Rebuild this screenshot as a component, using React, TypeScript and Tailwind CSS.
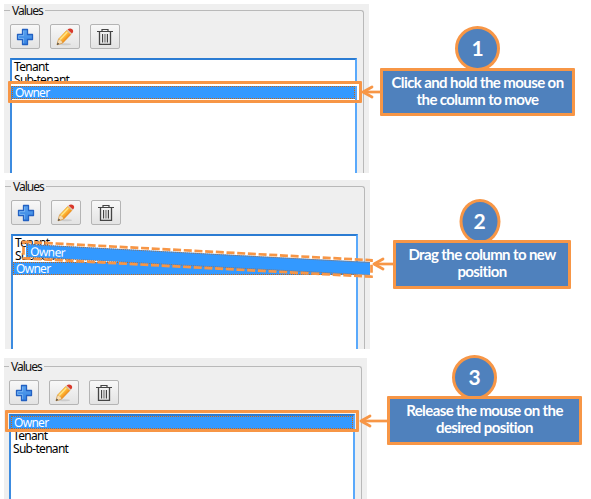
import React from "react";

function PlusIcon() {
  return (
    <svg width="18" height="18" viewBox="0 0 18 18">
      <defs>
        <linearGradient id="plusFill" x1="0" y1="0" x2="0" y2="1">
          <stop offset="0" stopColor="#5ba3ee" />
          <stop offset="1" stopColor="#3583e2" />
        </linearGradient>
      </defs>
      <path d="M6.5 1.5h5v5h5v5h-5v5h-5v-5h-5v-5h5z" fill="url(#plusFill)" stroke="#2361c2" strokeWidth="1.3" strokeLinejoin="round" />
      <path d="M7.6 15.3V10.5H2.7V7.6H7.6V2.7" fill="none" stroke="#86bff6" strokeWidth="0.7" />
    </svg>
  );
}

function PencilIcon() {
  return (
    <svg width="18" height="18" viewBox="0 0 18 18">
      <defs>
        <linearGradient id="pencilFill" x1="0.3" y1="0.3" x2="0.7" y2="0.7">
          <stop offset="0" stopColor="#ffc93c" />
          <stop offset="0.45" stopColor="#ffb838" />
          <stop offset="1" stopColor="#ea7d10" />
        </linearGradient>
      </defs>
      <ellipse cx="9" cy="16.2" rx="6" ry="1" fill="#cccccc" />
      <path d="M1 16.8 2.6 10.9 10.6 2.4 15 6.4 6.8 15z" fill="url(#pencilFill)" stroke="#e08a18" strokeWidth="0.5" />
      <path d="M1 16.8 2.5 11.2C4 11 6.5 13 6.6 15z" fill="#f8deb4" stroke="#c08a48" strokeWidth="0.4" />
      <path d="M0.9 17 1.6 14.5 3.3 16.1z" fill="#444" />
      <path d="M10.6 2.4 11.7 1.4 16 5.4 15 6.4z" fill="#d8c4a8" />
      <path d="M11.6 1.5C13 .2 15 .2 16.3 1.3 17.6 2.6 17.4 4.2 16 5.5z" fill="#d9382a" />
      <path d="M4.2 11.5 11.3 4" stroke="#ffe68c" strokeWidth="1.2" />
    </svg>
  );
}

function TrashIcon() {
  return (
    <svg width="18" height="18" viewBox="0 0 18 18" fill="none" stroke="#444">
      <path d="M1 3.5h16M6 3V1.5h6V3" strokeWidth="1.2" />
      <path d="M3.5 4v12.4h11V4" strokeWidth="1.3" />
      <path d="M6.5 6v8.5M11.5 6v8.5" strokeWidth="1" />
      <path d="M8.3 6v8.5M9.8 6v8.5" strokeWidth="0.8" stroke="#777" />
    </svg>
  );
}

function ToolButton({ children }: { children: React.ReactNode }) {
  return (
    <button className="flex h-[25px] w-[30px] items-center justify-center rounded-[2px] border border-[#b4b4b4] bg-gradient-to-b from-[#f8f8f8] to-[#e3e3e3]">
      {children}
    </button>
  );
}

function ListRow({ label, selected }: { label: string; selected?: boolean }) {
  return (
    <li
      className={
        selected
          ? "h-[13px] bg-[#3399ff] pl-[3px] text-white outline-1 -outline-offset-1 outline-dotted outline-[#cc6611]"
          : "h-[13px] pl-[2px] text-black"
      }
    >
      {label}
    </li>
  );
}

interface PanelProps {
  className: string;
  inset: string;
  items: string[];
  children?: React.ReactNode;
}

function ValuesPanel({ className, inset, items, children }: PanelProps) {
  return (
    <div className={`flex shrink-0 flex-col bg-[#efefef] pr-[5px] text-[12px] leading-[13px] tracking-[-0.7px] ${className}`}>
      <div className={`flex grow flex-col rounded-tr-[3px] border-t border-r border-[#b9b9b9] pr-[6px] ${inset}`}>
        <div className="-mt-[7px] h-[13px] w-fit bg-[#efefef] px-[2px] tracking-[-1px] text-[#111]">Values</div>
        <div className="mt-[7px] flex gap-[10px]">
          <ToolButton><PlusIcon /></ToolButton>
          <ToolButton><PencilIcon /></ToolButton>
          <ToolButton><TrashIcon /></ToolButton>
        </div>
        <ul className="mt-[9px] grow border-x-2 border-t-2 border-t-[#2b7cd3] border-r-[#5aa9fb] border-l-[#3c8be0] bg-white">
          {items.map((item) => (
            <ListRow key={item} label={item} selected={item === "Owner"} />
          ))}
        </ul>
      </div>
      {children}
    </div>
  );
}

function Arrow({ className, length }: { className: string; length: number }) {
  return (
    <svg className={`absolute ${className}`} width={length} height="14" viewBox={`0 0 ${length} 14`} fill="none" stroke="#f79646" strokeLinecap="round">
      <path d={`M2 7H${length}`} strokeWidth="2.7" strokeLinecap="butt" />
      <path d="M11 2 2 7l9 5" strokeWidth="2.8" strokeLinejoin="round" />
    </svg>
  );
}

interface CalloutProps {
  step: number;
  className: string;
  circle: string;
  box: string;
  lines: string[];
  children: React.ReactNode;
}

function Callout({ step, className, circle, box, lines, children }: CalloutProps) {
  return (
    <div className={`flex shrink-0 flex-col items-center font-[Lato,sans-serif] font-bold text-white ${className}`}>
      <div className={`flex shrink-0 items-center justify-center rounded-[50%] border-[3px] border-[#f79646] bg-[#4f81bd] pb-[2px] text-[21px] leading-none ${circle}`}>
        {step}
      </div>
      <div className={`relative flex w-full flex-col items-center rounded-[1px] border-[3px] border-[#f79646] bg-[#4f81bd] pt-[3px] text-[15px] leading-[17px] tracking-[-0.6px] whitespace-nowrap ${box}`}>
        {lines.map((line) => (
          <span key={line}>{line}</span>
        ))}
        {children}
      </div>
    </div>
  );
}

function DraggedRow() {
  return (
    <svg className="absolute top-[55px] left-[17px]" width="358" height="46" viewBox="17 235 358 46">
      <path d="M26 244 370 262V275L26 257z" fill="#3399ff" />
      <path d="M27 244.5 370 262.5M27 257 370 275M27.5 245v12" fill="none" stroke="#a8693c" strokeWidth="0.9" strokeDasharray="1 1" />
      <path d="M23.5 241.8 371.5 260.2V276.7L23.5 258.3z" fill="none" stroke="#f79646" strokeWidth="2.7" strokeDasharray="8 2.7" />
      <text x="30" y="255.7" fill="#fff" fontSize="12" letterSpacing="-0.6" transform="rotate(2 30 255.7)">Owner</text>
    </svg>
  );
}

export default function App() {
  return (
    <main className="flex h-[499px] w-[591px] flex-col overflow-hidden bg-white font-['Noto_Sans',sans-serif]">
      <section className="relative flex h-[176px] shrink-0 pl-[4px]">
        <ValuesPanel className="mt-[4px] h-[169px] w-[365px] pt-[6px]" inset="pl-[6px]" items={["Tenant", "Sub-tenant", "Owner"]}>
          <div className="absolute top-[81px] left-[8px] h-[22px] w-[354px] rounded-[1px] border-[3px] border-[#f79646]">
            <div className="h-full border-t-2 border-r-2 border-white" />
          </div>
        </ValuesPanel>
        <Callout
          step={1}
          className="mt-[26px] ml-[11px] w-[195px]"
          circle="h-[45px] w-[45px]"
          box="-mt-[3px] h-[48px]"
          lines={["Click and hold the mouse on", "the column to move"]}
        >
          <Arrow className="top-[14px] -left-[22px]" length={20} />
        </Callout>
      </section>

      <section className="relative flex h-[178px] shrink-0 pl-[5px]">
        <ValuesPanel className="mt-[4px] h-[169px] w-[365px] pt-[6px]" inset="pl-[6px]" items={["Tenant", "Sub-tenant", "Owner"]}>
          <div className="absolute top-[4px] left-0">
            <DraggedRow />
          </div>
        </ValuesPanel>
        <Callout
          step={2}
          className="mt-[23px] ml-[23px] w-[178px]"
          circle="h-[45px] w-[41px] -translate-x-[2.5px]"
          box="-mt-[4px] h-[49px]"
          lines={["Drag the column to new", "position"]}
        >
          <Arrow className="top-[14px] -left-[24px]" length={22} />
        </Callout>
      </section>

      <section className="relative flex h-[145px] shrink-0 pl-[4px]">
        <ValuesPanel className="mt-[4px] h-[141px] w-[363px] pt-[8px]" inset="pl-[5px]" items={["Owner", "Tenant", "Sub-tenant"]}>
          <div className="absolute top-[56px] left-[5px] h-[22px] w-[354px] rounded-[1px] border-[3px] border-[#f79646]" />
        </ValuesPanel>
        <Callout
          step={3}
          className="mt-[1px] ml-[20px] w-[195px]"
          circle="h-[45px] w-[45px] -translate-x-[10px]"
          box="-mt-[4px] h-[49px]"
          lines={["Release the mouse on the", "desired position"]}
        >
          <Arrow className="top-[15px] -left-[31px]" length={29} />
        </Callout>
      </section>
    </main>
  );
}
